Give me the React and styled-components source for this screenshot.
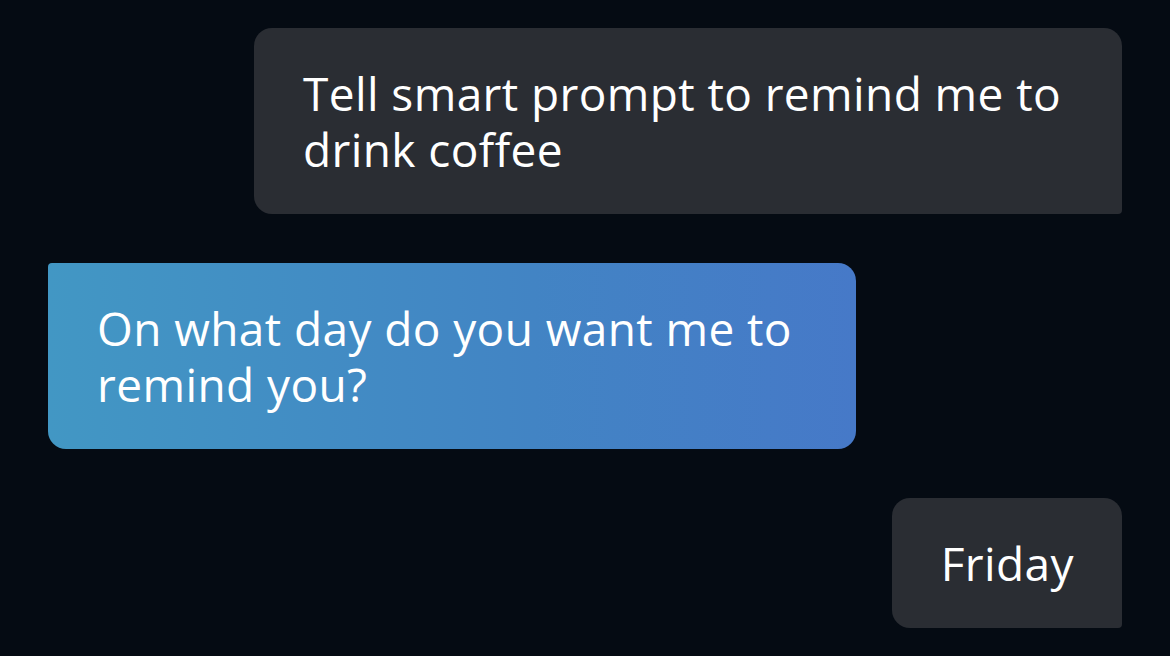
import React from 'react';
import styled, { createGlobalStyle } from 'styled-components';

const GlobalStyle = createGlobalStyle`
    html, body {
        margin: 0;
        padding: 0;
        background: #050b13;
    }
    body {
        font-family: "Open Sans", "Noto Sans", sans-serif;
        -webkit-font-smoothing: antialiased;
    }
`

const messages = [
    { id: 1, from: 'user', text: 'Tell smart prompt to remind me to drink coffee', width: 868 },
    { id: 2, from: 'bot', text: 'On what day do you want me to remind you?', width: 808 },
    { id: 3, from: 'user', text: 'Friday' },
]

const App = () => {
    return (
        <>
            <GlobalStyle />
            <Thread>
                {messages.map((msg) => (
                    <Row key={msg.id} $from={msg.from}>
                        <Bubble $from={msg.from} $width={msg.width}>
                            {msg.text}
                        </Bubble>
                    </Row>
                ))}
            </Thread>
        </>
    );
}

const Thread = styled.div`
    width: 1170px;
    height: 656px;
    box-sizing: border-box;
    padding: 28px 48px 0;
    display: flex;
    flex-direction: column;
    gap: 49px;
    background: #050b13;
    overflow: hidden;
`

const Row = styled.div`
    display: flex;
    justify-content: ${(p) => (p.$from === 'user' ? 'flex-end' : 'flex-start')};
`

const Bubble = styled.div`
    box-sizing: border-box;
    width: ${(p) => (p.$width ? `${p.$width}px` : 'auto')};
    padding: 37px 48px 37px 49px;
    font-size: 46px;
    line-height: 56px;
    letter-spacing: 0.4px;
    color: #ffffff;
    background: ${(p) =>
        p.$from === 'user'
            ? '#2a2d33'
            : 'linear-gradient(90deg, #4297c4 0%, #4284c4 60%, #4679c8 100%)'};
    border-radius: ${(p) => (p.$from === 'user' ? '18px 18px 4px 18px' : '4px 18px 18px 18px')};
`

export default App;
